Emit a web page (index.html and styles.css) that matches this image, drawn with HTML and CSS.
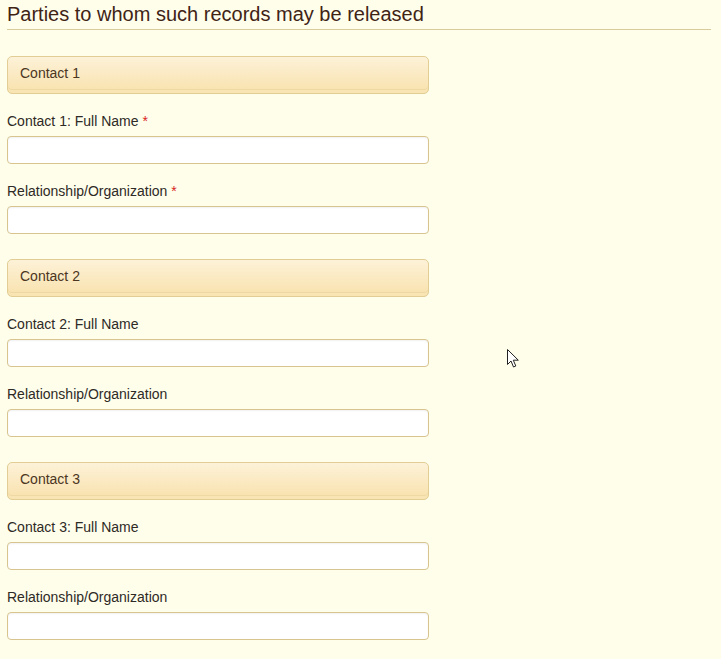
FILE: index.html
```html
<!DOCTYPE html>
<html lang="en">
<head>
    <meta charset="UTF-8">
    <title>Parties to whom such records may be released</title>
    <link rel="stylesheet" href="styles.css">
</head>
<body>
    <div class="container">
        <h2 class="section-title">Parties to whom such records may be released</h2>

        <div class="contact-group">
            <div class="contact-header">Contact 1</div>
            <div class="field">
                <label class="field-label">Contact 1: Full Name <span class="required">*</span></label>
                <input type="text" class="text-input">
            </div>
            <div class="field">
                <label class="field-label">Relationship/Organization <span class="required">*</span></label>
                <input type="text" class="text-input">
            </div>
        </div>

        <div class="contact-group">
            <div class="contact-header">Contact 2</div>
            <div class="field">
                <label class="field-label">Contact 2: Full Name</label>
                <input type="text" class="text-input">
            </div>
            <div class="field">
                <label class="field-label">Relationship/Organization</label>
                <input type="text" class="text-input">
            </div>
        </div>

        <div class="contact-group">
            <div class="contact-header">Contact 3</div>
            <div class="field">
                <label class="field-label">Contact 3: Full Name</label>
                <input type="text" class="text-input">
            </div>
            <div class="field">
                <label class="field-label">Relationship/Organization</label>
                <input type="text" class="text-input">
            </div>
        </div>
    </div>
    <!-- mouse pointer that was in the screenshot -->
    <svg class="pointer" width="13" height="20" viewBox="0 0 13 20">
        <path d="M0.5 0.5 L0.5 15.5 L4 12 L6.5 18 L8.8 17 L6.3 11.2 L11.3 11.2 Z" fill="#ffffff" stroke="#222222" stroke-width="1" stroke-linejoin="miter"/>
    </svg>
</body>
</html>
```

FILE: styles.css
```css
body {
    margin: 0;
    padding: 0;
    background-color: #fffeeb;
    color: #333333;
    font-family: "Liberation Sans", Arial, sans-serif;
    font-size: 14px;
}
.container {
    padding: 2px 10px 0 7px;
}
.section-title {
    margin: 0 0 26px 0;
    padding-bottom: 3px;
    font-size: 20px;
    line-height: 24px;
    font-weight: normal;
    color: #3f2416;
    border-bottom: 1px solid #d9cb9c;
}
.contact-group {
    width: 422px;
    margin-bottom: 25px;
}
.contact-header {
    box-sizing: border-box;
    height: 38px;
    padding: 8px 12px 0 12px;
    line-height: 16px;
    color: #4b3622;
    border: 1px solid #e2cd94;
    border-radius: 5px;
    background: linear-gradient(to bottom, #fdf2d8 0%, #f8e1ac 100%);
    box-shadow: inset 0 -3px 0 #f9e5b4, inset 0 -4px 0 #eed9a5;
}
.field {
    margin-top: 19px;
}
.field-label {
    display: block;
    line-height: 16px;
    margin-bottom: 7px;
    color: #2e2a26;
}
.required {
    color: #d8241c;
}
.text-input {
    display: block;
    width: 100%;
    height: 28px;
    box-sizing: border-box;
    margin: 0;
    border: 1px solid #d7c48f;
    border-radius: 4px;
    background-color: #ffffff;
    box-shadow: inset 0 1px 2px rgba(0, 0, 0, 0.06);
    font-family: "Liberation Sans", Arial, sans-serif;
    font-size: 14px;
}
.pointer {
    position: absolute;
    left: 507px;
    top: 349px;
}
```
